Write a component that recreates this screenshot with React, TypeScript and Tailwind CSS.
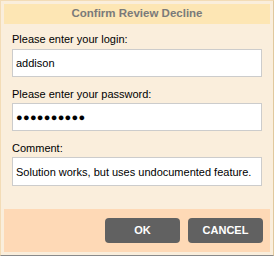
export default function App() {
  return (
    <div
      className="w-[274px] h-[256px] bg-[#faeedc] border border-[#f3dcb6] border-r-[#e0c89c] border-b-[#8a8a8a] p-[3px] flex flex-col"
      style={{ fontFamily: '"Liberation Sans", Arial, sans-serif' }}
    >
      <div className="h-[20px] bg-[#fde6b4] flex items-center justify-center text-[11.5px] font-bold text-[#7a7a7a]">
        Confirm Review Decline
      </div>

      <div className="flex flex-col px-[8px] pt-[8px] text-[11px] text-black">
        <label className="leading-[14px] mb-[3px]">Please enter your login:</label>
        <input
          readOnly
          value="addison"
          className="h-[28px] bg-white border border-[#cccccc] px-[3px] text-[11px] outline-none"
        />
        <label className="leading-[14px] mt-[10px] mb-[2px]">Please enter your password:</label>
        <div className="h-[28px] bg-white border border-[#cccccc] px-[3px] flex items-center text-[11px] tracking-[0.3px]">
          ●●●●●●●●●●
        </div>
        <label className="leading-[14px] mt-[10px] mb-[2px]">Comment:</label>
        <input
          readOnly
          value="Solution works, but uses undocumented feature."
          className="h-[29px] bg-white border border-[#cccccc] px-[3px] text-[11px] outline-none"
        />
      </div>

      <div className="mt-auto h-[43px] bg-[#fed9b6] flex items-center justify-end gap-[8px] pr-[7px]">
        <button className="w-[75px] h-[25px] rounded-[4px] bg-[#616161] text-white text-[11px] font-bold">
          OK
        </button>
        <button className="w-[75px] h-[25px] rounded-[4px] bg-[#616161] text-white text-[11px] font-bold">
          CANCEL
        </button>
      </div>
    </div>
  )
}
